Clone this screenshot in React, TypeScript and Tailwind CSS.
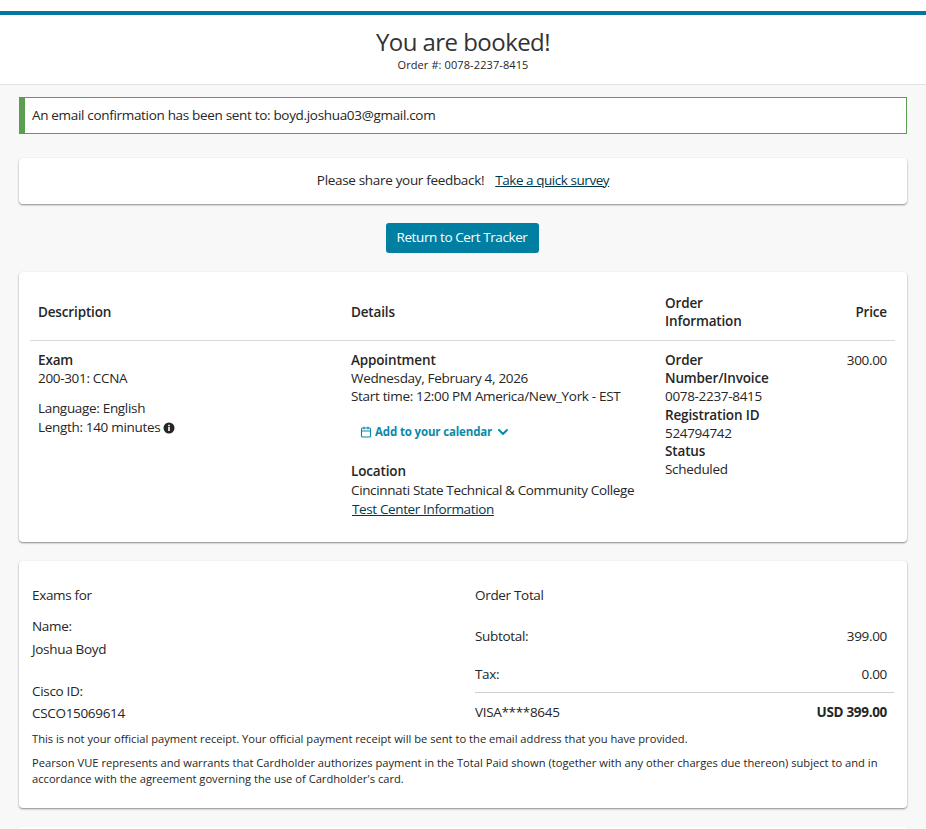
import { Calendar, ChevronDown } from 'lucide-react';

function InfoDot() {
  return (
    <svg viewBox="0 0 12 12" className="inline-block w-3 h-3 ml-[3px] align-[-2px]">
      <circle cx="6" cy="6" r="5.5" fill="#262626" />
      <rect x="5.2" y="5" width="1.6" height="4" fill="#fff" />
      <rect x="5.2" y="2.8" width="1.6" height="1.5" fill="#fff" />
    </svg>
  );
}

export default function App() {
  return (
    <div className="h-[829px] overflow-hidden bg-[#f8f8f8] text-[#262626] text-[13.5px] tracking-[-0.32px] font-['Open_Sans',sans-serif]">
      {/* page header */}
      <div className="bg-white pt-[11px] h-[85px] border-b border-[#e3e3e3]">
        <div className="h-1 bg-[#0077a3]" />
        <h1 className="text-center text-[24px] tracking-[-0.55px] leading-[30px] mt-3 text-[#333]">You are booked!</h1>
        <p className="text-center text-[11px] tracking-[0.1px] leading-[14px] mt-[1px]">Order #: 0078-2237-8415</p>
      </div>

      <div className="px-[19px]">
        <div className="mt-3 h-[37px] flex items-center bg-white border border-[#5a9e50] border-l-[6px] pl-[7px]">
          An email confirmation has been sent to: boyd.joshua03@gmail.com
        </div>

        <div className="mt-6 h-[46px] pb-[2px] flex items-center justify-center bg-white rounded shadow-[0_1px_2px_rgba(0,0,0,0.45)]">
          <span>Please share your feedback!</span>
          <a className="ml-[11px] underline text-[#00384f] tracking-[-0.45px]">Take a quick survey</a>
        </div>

        <div className="mt-[19px] flex justify-center pr-[2px]">
          <button className="w-[153px] h-[30px] pb-[2px] rounded-[3px] bg-[#007fa3] text-white tracking-[-0.4px]">Return to Cert Tracker</button>
        </div>

        {/* order table */}
        <div className="mt-[19px] h-[270px] bg-white rounded shadow-[0_1px_2px_rgba(0,0,0,0.45)] pl-[11px] pr-3 pt-[22px]">
          <div className="grid grid-cols-[313px_314px_1fr_auto] h-[47px] border-b border-[#d9d9d9] font-semibold tracking-[-0.15px] leading-[18px] pl-2">
            <div className="pt-[9px]">Description</div>
            <div className="pt-[9px]">Details</div>
            <div>Order<br />Information</div>
            <div className="pt-[9px] text-right pr-2">Price</div>
          </div>
          <div className="grid grid-cols-[313px_314px_1fr_auto] pt-[10px] leading-[18px] pl-2 pr-2">
            <div>
              <div className="font-semibold tracking-[-0.15px]">Exam</div>
              <div>200-301: CCNA</div>
              <div className="mt-3">Language: English</div>
              <div className="mt-[1px]">Length: 140 minutes<InfoDot /></div>
            </div>
            <div>
              <div className="font-semibold tracking-[-0.15px]">Appointment</div>
              <div>Wednesday, February 4, 2026</div>
              <div>Start time: 12:00 PM America/New_York - EST</div>
              <div className="mt-[18px] ml-[9px] flex items-center text-[11.5px] tracking-[-0.15px] font-bold text-[#0a8aa8]">
                <Calendar className="w-3 h-3 mr-[3px]" strokeWidth={2.25} />
                <span>Add to your calendar</span>
                <ChevronDown className="w-4 h-4 ml-[3px]" strokeWidth={3} />
              </div>
              <div className="mt-[21px] font-semibold tracking-[-0.15px]">Location</div>
              <div className="mt-[1px] tracking-[-0.36px]">Cincinnati State Technical &amp; Community College</div>
              <a className="block mt-[1px] underline text-[#00384f] ml-[1px] tracking-[-0.37px]">Test Center Information</a>
            </div>
            <div className="w-[120px]">
              <div className="font-semibold tracking-[-0.15px]">Order Number/Invoice</div>
              <div>0078-2237-8415</div>
              <div className="mt-[1px] font-semibold tracking-[-0.15px]">Registration ID</div>
              <div>524794742</div>
              <div className="font-semibold tracking-[-0.15px]">Status</div>
              <div>Scheduled</div>
            </div>
            <div className="text-right">300.00</div>
          </div>
        </div>

        {/* payment summary */}
        <div className="mt-[19px] h-[247px] bg-white rounded shadow-[0_1px_2px_rgba(0,0,0,0.45)] pl-[13px] pr-[13px] pt-[25px]">
          <div className="flex h-[145px]">
            <div className="w-[443px]">
              <div className="leading-[18px]">Exams for</div>
              <div className="mt-[13px] leading-[18px]">Name:</div>
              <div className="mt-[5px] leading-[18px]">Joshua Boyd</div>
              <div className="mt-[24px] leading-[18px]">Cisco ID:</div>
              <div className="mt-[4px] leading-[18px]">CSCO15069614</div>
            </div>
            <div className="flex-1">
              <div className="leading-[18px]">Order Total</div>
              <div className="mt-[23px] flex justify-between pr-[7px] leading-[18px]"><span>Subtotal:</span><span>399.00</span></div>
              <div className="mt-5 flex justify-between pr-[7px] leading-[18px]"><span>Tax:</span><span>0.00</span></div>
              <div className="mt-[9px] border-t border-[#cfcfcf] pt-[10px] flex justify-between pr-[7px] leading-[18px]">
                <span>VISA****8645</span><span className="font-bold">USD 399.00</span>
              </div>
            </div>
          </div>
          <p className="text-[11.16px] tracking-normal leading-4">This is not your official payment receipt. Your official payment receipt will be sent to the email address that you have provided.</p>
          <p className="mt-2 text-[11.16px] tracking-normal leading-4">Pearson VUE represents and warrants that Cardholder authorizes payment in the Total Paid shown (together with any other charges due thereon) subject to and in accordance with the agreement governing the use of Cardholder's card.</p>
        </div>

        <div className="mt-[19px] h-10 bg-white rounded" />
      </div>
    </div>
  );
}
